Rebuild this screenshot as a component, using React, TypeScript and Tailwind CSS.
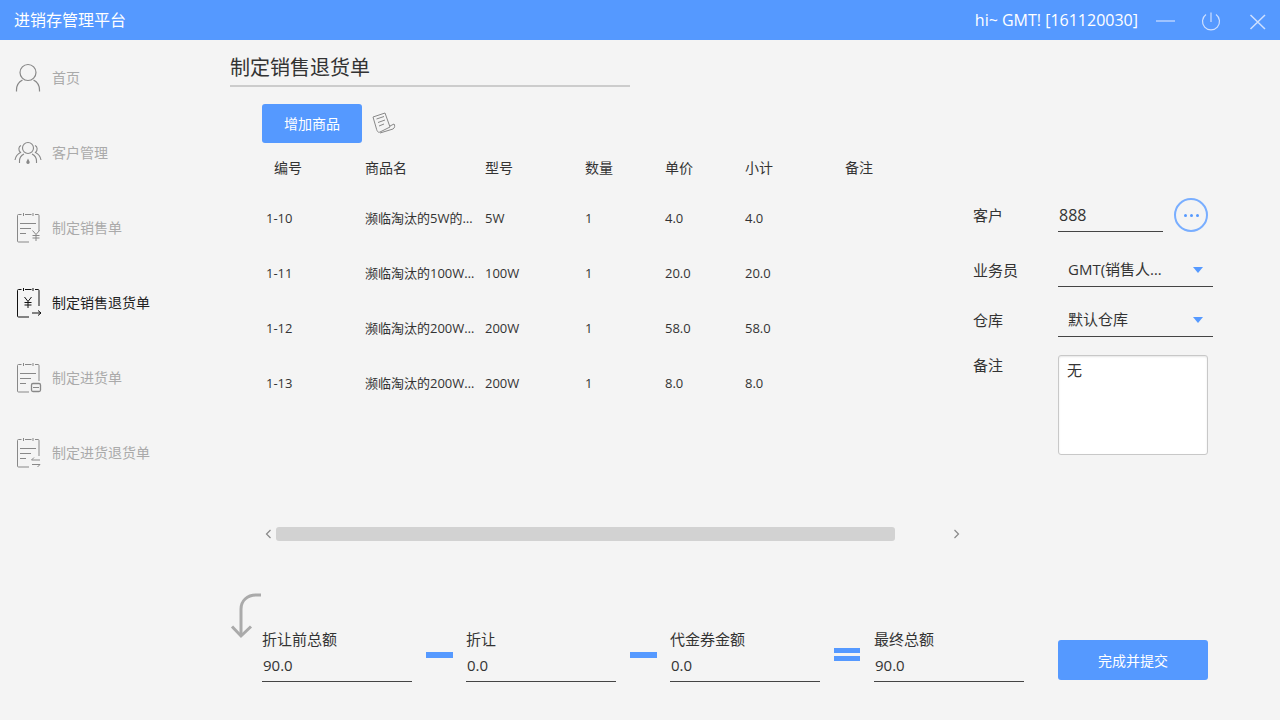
import React from "react";

const font = { fontFamily: '"Open Sans","Noto Sans CJK SC",sans-serif' };

function Clip({ color, children }: { color: string; children?: React.ReactNode }) {
  return (
    <svg width="28" height="30" viewBox="0 0 28 30" fill="none" stroke={color} strokeWidth="1">
      <path d="M7.5 1.5H4.5Q3.5 1.5 3.5 2.5V28Q3.5 29 4.5 29H15M11 1.5H17.5M21 1.5H24Q25 1.5 25 2.5V18" />
      <path d="M9.5 0V3M19 0V3" />
      {children}
    </svg>
  );
}
const Lines = () => <path d="M6 10.5H22M6 15.5H17M6 20.5H12" />;

const icons: Record<string, React.ReactNode> = {
  home: (
    <svg width="28" height="30" viewBox="0 0 28 30" fill="none" stroke="#888" strokeWidth="1.2">
      <circle cx="14" cy="9.5" r="8" />
      <path d="M2.5 28.5V27C2.5 22 5.5 18.5 8.5 17M25.5 28.5V27C25.5 22 22.5 18.5 19.5 17" />
    </svg>
  ),
  customer: (
    <svg width="28" height="30" viewBox="0 0 28 30" fill="none" stroke="#888" strokeWidth="1.1">
      <circle cx="14" cy="10" r="5.5" />
      <path d="M7 7.5C4.5 8.5 4 12 6.5 14.5C3.5 16 1.5 19 1 22M21 7.5C23.5 8.5 24 12 21.5 14.5C24.5 16 26.5 19 27 22" />
      <path d="M5.5 25V23C5.5 19 8 17 10 16M22.5 25V23C22.5 19 20 17 18 16" />
      <path d="M14 20.5L15.5 23.5A1.7 1.7 0 1 1 12.5 23.5Z" fill="#888" stroke="none" />
    </svg>
  ),
  sale: (
    <Clip color="#888">
      <Lines />
      <path d="M18.5 17.5L22 21.5L25.5 17.5M22 21.5V28M18.5 22.5H25.5M18.5 25H25.5" />
    </Clip>
  ),
  saleReturn: (
    <Clip color="#111">
      <path d="M10.5 9L14 13.5L17.5 9M14 13.5V20M10.5 14.5H17.5M10.5 17H17.5" />
      <path d="M18 25H27M24 22.5L27 25L24 27.5" />
    </Clip>
  ),
  purchase: (
    <Clip color="#888">
      <Lines />
      <rect x="17.5" y="20.5" width="9" height="8" rx="1.5" fill="#f4f4f4" strokeWidth="1.3" />
      <path d="M19 24.5H25" />
    </Clip>
  ),
  purchaseReturn: (
    <Clip color="#888">
      <Lines />
      <path d="M17.5 22H26M17.5 22L20 19.5M26 26.5H18M26 26.5L23.5 29" />
    </Clip>
  ),
};

const nav = [
  ["home", "首页"],
  ["customer", "客户管理"],
  ["sale", "制定销售单"],
  ["saleReturn", "制定销售退货单"],
  ["purchase", "制定进货单"],
  ["purchaseReturn", "制定进货退货单"],
];

const rows = [
  ["1-10", "濒临淘汰的5W的灯泡", "5W", "1", "4.0", "4.0"],
  ["1-11", "濒临淘汰的100W的灯泡", "100W", "1", "20.0", "20.0"],
  ["1-12", "濒临淘汰的200W的灯泡", "200W", "1", "58.0", "58.0"],
  ["1-13", "濒临淘汰的200W的灯泡", "200W", "1", "8.0", "8.0"],
];

function Caret() {
  return <div className="mt-[1px] w-0 h-0 border-x-[5px] border-x-transparent border-t-[6px] border-t-[#5599ff]" />;
}

function Field({ label, value }: { label: string; value: string }) {
  return (
    <div className="w-[150px] pt-[36px]">
      <div className="text-[15px] leading-[20px] text-[#333]">{label}</div>
      <div className="h-[33px] border-b border-[#444] pl-[1px] pt-[5px] text-[15px] leading-[22px] text-[#333]">{value}</div>
    </div>
  );
}

function Minus() {
  return (
    <div className="w-[54px] pt-[59px] flex justify-center">
      <div className="w-[27px] h-[6px] bg-[#5599ff]" />
    </div>
  );
}

export default function App() {
  return (
    <div className="w-[1280px] h-[720px] overflow-hidden flex flex-col bg-[#f4f4f4]" style={font}>
      <header className="h-10 shrink-0 bg-[#5599ff] flex items-center pl-[14px] text-white">
        <span className="text-[16px]">进销存管理平台</span>
        <span className="ml-auto text-[16px]">hi~ GMT! [161120030]</span>
        <svg className="ml-[18px] mr-[6px]" width="118" height="40" viewBox="0 0 118 40" fill="none" stroke="#cfe0ff" strokeWidth="1.2">
          <path d="M0 21H19" />
          <path d="M50 14.5A8.5 8.5 0 1 0 60 14.5M55 12.5V22" />
          <path d="M94.5 15L109 29M109 15L94.5 29" strokeWidth="1.5" />
        </svg>
      </header>
      <div className="flex flex-1">
        <aside className="w-[230px] shrink-0">
          {nav.map(([k, t]) => (
            <div key={k} className={`h-[75px] flex items-center pl-[14px] gap-[10px] text-[14px] ${k === "saleReturn" ? "text-[#222]" : "text-[#aaa]"}`}>
              {icons[k]}
              <span>{t}</span>
            </div>
          ))}
        </aside>
        <main className="flex-1 flex flex-col">
          <div className="mt-[15px] w-[400px] h-[32px] pt-[1px] border-b-2 border-[#ccc] text-[20px] leading-[24px] text-[#333]">制定销售退货单</div>
          <div className="flex h-[506px]">
            <div className="w-[743px] shrink-0 flex flex-col">
              <div className="mt-[17px] ml-[32px] flex items-center gap-[10px]">
                <div className="w-[100px] h-[39px] rounded-[3px] bg-[#5599ff] text-white text-[14px] flex items-center justify-center">增加商品</div>
                <svg width="24" height="24" viewBox="0 0 24 24" fill="none" stroke="#888" strokeWidth="1">
                  <path d="M1 5L13 1L18 15L8 20C6 21 5 19 4.5 17Z" />
                  <path d="M4.5 7L12 4.5M6 10.5L13 8M7 14L12 12" />
                  <path d="M8 21L21 17C23 16 23 13 22 12L18 14" />
                </svg>
              </div>
              <div className="ml-[32px] h-[48px] flex items-center text-[14px] text-[#333]">
                <div className="w-[103px] pl-[12px]">编号</div>
                <div className="w-[120px]">商品名</div>
                <div className="w-[100px]">型号</div>
                <div className="w-[80px]">数量</div>
                <div className="w-[80px]">单价</div>
                <div className="w-[100px]">小计</div>
                <div>备注</div>
              </div>
              {rows.map((r) => (
                <div key={r[0]} className="ml-[32px] h-[55px] flex items-center text-[13px] text-[#333]">
                  <div className="w-[103px] pl-[4px]">{r[0]}</div>
                  <div className="w-[120px] pr-[6px] truncate">{r[1]}</div>
                  <div className="w-[100px]">{r[2]}</div>
                  <div className="w-[80px]">{r[3]}</div>
                  <div className="w-[80px]">{r[4]}</div>
                  <div className="w-[100px]">{r[5]}</div>
                </div>
              ))}
              <div className="mt-[116px] ml-[34px] w-[699px] h-[14px] flex items-center">
                <svg width="12" height="14" viewBox="0 0 12 14" fill="none" stroke="#888" strokeWidth="1.2"><path d="M6.5 3L2.5 7L6.5 11" /></svg>
                <div className="w-[619px] h-[14px] rounded-[3px] bg-[#d2d2d2]" />
                <svg className="ml-auto" width="12" height="14" viewBox="0 0 12 14" fill="none" stroke="#888" strokeWidth="1.2"><path d="M3.5 3L7.5 7L3.5 11" /></svg>
              </div>
            </div>
            <div className="flex-1 text-[15px] text-[#333]">
              <div className="mt-[110px] flex h-[35px]">
                <div className="w-[85px] pt-[8px] leading-[20px]">客户</div>
                <div className="w-[105px] h-[35px] border-b border-[#444] pl-[1px] pt-[6px] text-[16px] leading-[24px]">888</div>
                <div className="ml-[11px] mt-[1px] w-[34px] h-[34px] rounded-full border-2 border-[#79aeff] flex items-center justify-center gap-[3px]">
                  <i className="w-[3px] h-[3px] rounded-full bg-[#5599ff]" />
                  <i className="w-[3px] h-[3px] rounded-full bg-[#5599ff]" />
                  <i className="w-[3px] h-[3px] rounded-full bg-[#5599ff]" />
                </div>
              </div>
              <div className="mt-[20px] flex h-[35px]">
                <div className="w-[85px] pt-[8px] leading-[20px]">业务员</div>
                <div className="w-[155px] border-b border-[#444] flex items-center pl-[10px] pr-[10px] pt-[1px]">
                  <span className="w-[96px] truncate">GMT(销售人员)</span>
                  <span className="ml-auto"><Caret /></span>
                </div>
              </div>
              <div className="mt-[15px] flex h-[35px]">
                <div className="w-[85px] pt-[8px] leading-[20px]">仓库</div>
                <div className="w-[155px] border-b border-[#444] flex items-center pl-[10px] pr-[10px] pt-[1px]">
                  <span>默认仓库</span>
                  <span className="ml-auto"><Caret /></span>
                </div>
              </div>
              <div className="mt-[18px] flex">
                <div className="w-[85px] leading-[20px]">备注</div>
                <div className="w-[150px] h-[100px] rounded-[3px] border border-[#c8c8c8] bg-white px-[8px] py-[4px] leading-[20px] shadow-[inset_0_1px_2px_rgba(0,0,0,0.1)]">无</div>
              </div>
            </div>
          </div>
          <div className="flex items-start">
            <svg className="shrink-0" width="32" height="46" viewBox="0 0 32 46" fill="none" stroke="#aaa" strokeWidth="3">
              <path d="M31 2H26C17 2 11 8 11 16V43" />
              <path d="M2 33.5L11 43L21 33.5" />
            </svg>
            <Field label="折让前总额" value="90.0" />
            <Minus />
            <Field label="折让" value="0.0" />
            <Minus />
            <Field label="代金券金额" value="0.0" />
            <div className="w-[54px] pt-[55px] flex flex-col items-center gap-[3px]">
              <div className="w-[26px] h-[5px] bg-[#5599ff]" />
              <div className="w-[26px] h-[5px] bg-[#5599ff]" />
            </div>
            <Field label="最终总额" value="90.0" />
            <div className="ml-[34px] mt-[47px] w-[150px] h-[40px] rounded-[3px] bg-[#5599ff] text-white text-[14px] flex items-center justify-center">完成并提交</div>
          </div>
        </main>
      </div>
    </div>
  );
}
